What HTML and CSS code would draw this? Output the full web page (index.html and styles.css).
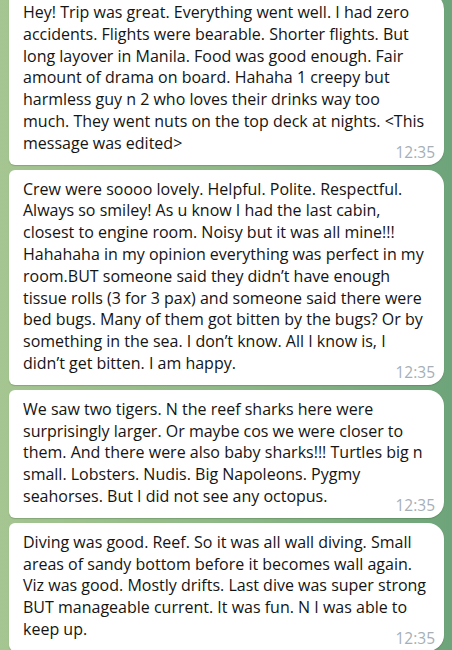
FILE: index.html
```html
<!DOCTYPE html>
<html>
<head>
<meta charset="utf-8">
<link rel="stylesheet" href="styles.css">
</head>
<body>
<div class="chat">
  <div class="bubble">
    <p class="text">Hey! Trip was great. Everything went well. I had zero accidents. Flights were bearable. Shorter flights. But long layover in Manila. Food was good enough. Fair amount of drama on board. Hahaha 1 creepy but harmless guy n 2 who loves their drinks way too much. They went nuts on the top deck at nights. &lt;This message was edited&gt;</p>
    <span class="time">12:35</span>
  </div>
  <div class="bubble">
    <p class="text">Crew were soooo lovely. Helpful. Polite. Respectful. Always so smiley! As u know I had the last cabin, closest to engine room. Noisy but it was all mine!!! Hahahaha in my opinion everything was perfect in my room.BUT someone said they didn’t have enough tissue rolls (3 for 3 pax) and someone said there were bed bugs. Many of them got bitten by the bugs? Or by something in the sea. I don’t know. All I know is, I didn’t get bitten. I am happy.</p>
    <span class="time">12:35</span>
  </div>
  <div class="bubble">
    <p class="text">We saw two tigers. N the reef sharks here were surprisingly larger. Or maybe cos we were closer to them. And there were also baby sharks!!! Turtles big n small. Lobsters. Nudis. Big Napoleons. Pygmy seahorses. But I did not see any octopus.</p>
    <span class="time">12:35</span>
  </div>
  <div class="bubble">
    <p class="text">Diving was good. Reef. So it was all wall diving. Small areas of sandy bottom before it becomes wall again. Viz was good. Mostly drifts. Last dive was super strong BUT manageable current. It was fun. N I was able to keep up.</p>
    <span class="time">12:35</span>
  </div>
</div>
</body>
</html>
```
FILE: styles.css
```css
html, body {
  margin: 0;
  padding: 0;
  height: 100%;
  overflow: hidden;
}
body {
  background: linear-gradient(to right, #a5c591 0%, #8fb887 50%, #6ea47a 100%);
  font-family: "Open Sans", "Noto Sans", sans-serif;
}
.chat {
  display: flex;
  flex-direction: column;
  gap: 5px;
  padding-left: 9px;
  margin-top: -7px;
}
.bubble {
  position: relative;
  width: 435px;
  box-sizing: border-box;
  background: #ffffff;
  border-radius: 6px 16px 16px 6px;
  padding: 9px 14px 10px 14px;
  box-shadow: 0 1px 1px rgba(40, 80, 40, 0.25);
}
.text {
  margin: 0;
  font-size: 16px;
  line-height: 21.8px;
  color: #141414;
}
.time {
  position: absolute;
  right: 9px;
  bottom: 3px;
  font-size: 15.5px;
  line-height: 20px;
  color: #a6afb7;
}
```
